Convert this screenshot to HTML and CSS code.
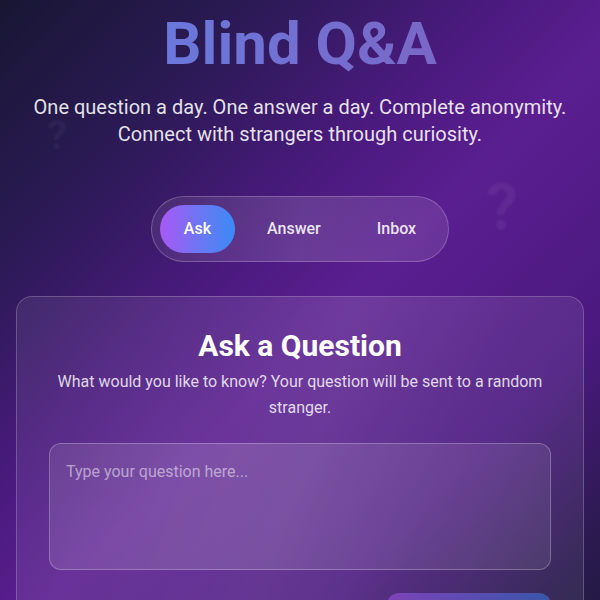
FILE: index.html
```html
<!DOCTYPE html>
<html lang="en">
<head>
<meta charset="utf-8">
<title>Blind Q&amp;A</title>
<link rel="stylesheet" href="styles.css">
</head>
<body>
  <span class="floater floater-left">?</span>
  <span class="floater floater-right">?</span>
  <main class="page">
    <header class="hero">
      <h1 class="title"><span class="title-text">Blind Q&amp;A</span></h1>
      <p class="subtitle">One question a day. One answer a day. Complete anonymity.<br>Connect with strangers through curiosity.</p>
    </header>

    <nav class="tabs-wrap">
      <div class="tabs">
        <button class="tab tab-active">Ask</button>
        <button class="tab">Answer</button>
        <button class="tab">Inbox</button>
      </div>
    </nav>

    <section class="card">
      <h2 class="card-title">Ask a Question</h2>
      <p class="card-desc">What would you like to know? Your question will be sent to a random stranger.</p>
      <textarea class="question-input" placeholder="Type your question here..."></textarea>
      <div class="actions">
        <button class="send-btn" disabled>Send Question</button>
      </div>
    </section>
  </main>
</body>
</html>
```

FILE: styles.css
```css
* { box-sizing: border-box; }

html, body { margin: 0; padding: 0; }

body {
  min-height: 100vh;
  font-family: Roboto, "Liberation Sans", sans-serif;
  color: #fff;
  background: linear-gradient(135deg, #181633 0%, #2b1a55 20%, #4a1a7e 38%, #5a1e90 50%, #4a197f 72%, #2a1a4e 88%, #1c1a3a 100%);
  overflow: hidden;
  position: relative;
}

.floater {
  position: absolute;
  font-weight: 700;
  color: rgba(255, 255, 255, 0.045);
  filter: blur(1px);
  line-height: 1;
}
.floater-left { left: 47px; top: 116px; font-size: 40px; }
.floater-right { left: 486px; top: 176px; font-size: 64px; color: rgba(255, 255, 255, 0.055); }

.page {
  position: relative;
  padding: 8px 16px 16px;
}

.hero { text-align: center; }

.title {
  margin: 0 0 14px;
  font-size: 60px;
  line-height: 72px;
  font-weight: 700;
}
.title-text {
  background: linear-gradient(90deg, #6a78dc 0%, #7a68c6 100%);
  -webkit-background-clip: text;
  background-clip: text;
  color: transparent;
}

.subtitle {
  margin: 0;
  font-size: 20px;
  line-height: 27px;
  color: rgba(255, 255, 255, 0.88);
}

.tabs-wrap {
  display: flex;
  justify-content: center;
  margin-top: 48px;
}

.tabs {
  display: flex;
  gap: 8px;
  padding: 8px;
  border-radius: 40px;
  background: linear-gradient(90deg, rgba(255,255,255,0.08), rgba(255,255,255,0.14) 50%, rgba(255,255,255,0.1));
  border: 1px solid rgba(255, 255, 255, 0.22);
}

.tab {
  font-family: inherit;
  font-size: 16px;
  font-weight: 500;
  line-height: 24px;
  padding: 12px 24px;
  border: none;
  border-radius: 30px;
  background: transparent;
  color: rgba(255, 255, 255, 0.88);
}

.tab-active {
  color: #fff;
  background: linear-gradient(90deg, #a858f4 0%, #6a78f4 55%, #3b8af6 100%);
}

.card {
  margin-top: 34px;
  padding: 32px;
  border-radius: 16px;
  border: 1px solid rgba(255, 255, 255, 0.2);
  background: linear-gradient(110deg, rgba(255,255,255,0.07) 0%, rgba(255,255,255,0.1) 35%, rgba(255,255,255,0.13) 50%, rgba(255,255,255,0.09) 70%, rgba(255,255,255,0.07) 100%);
  text-align: center;
}

.card-title {
  margin: 0 0 7px;
  font-size: 30px;
  line-height: 33px;
  font-weight: 700;
}

.card-desc {
  margin: 0 0 23px;
  font-size: 16px;
  line-height: 25.6px;
  color: rgba(255, 255, 255, 0.82);
}

.question-input {
  display: block;
  width: 100%;
  height: 127px;
  padding: 16px;
  resize: none;
  font-family: inherit;
  font-size: 16px;
  line-height: 24px;
  color: #fff;
  border-radius: 12px;
  border: 1px solid rgba(255, 255, 255, 0.25);
  background: linear-gradient(110deg, rgba(255,255,255,0.1) 0%, rgba(255,255,255,0.14) 35%, rgba(255,255,255,0.11) 60%, rgba(255,255,255,0.08) 100%);
  outline: none;
}
.question-input::placeholder { color: rgba(255, 255, 255, 0.5); }

.actions {
  display: flex;
  justify-content: flex-end;
  margin-top: 23px;
}

.send-btn {
  font-family: inherit;
  font-size: 16px;
  font-weight: 500;
  line-height: 24px;
  padding: 14px 30px;
  border: none;
  border-radius: 12px;
  color: #fff;
  background: linear-gradient(90deg, #a858f4, #3b82f6);
  opacity: 0.5;
}
```
